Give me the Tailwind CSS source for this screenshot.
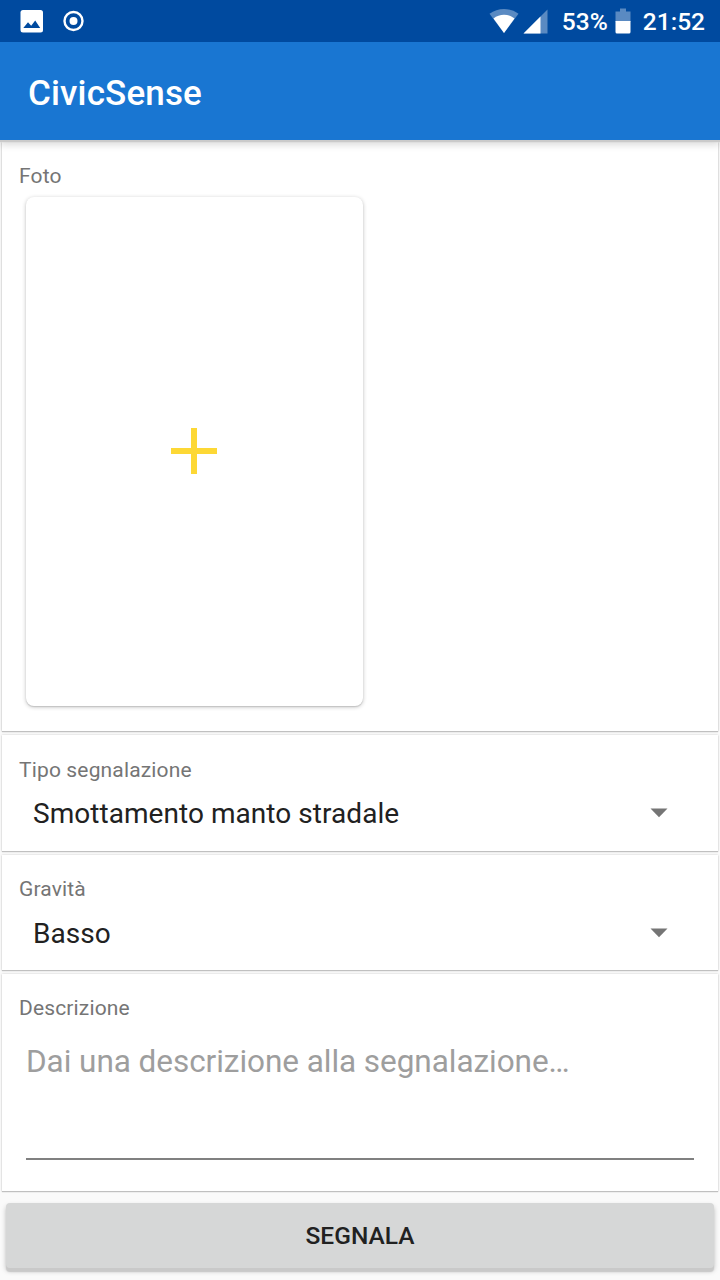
<!DOCTYPE html>
<html lang="it">
<head>
<meta charset="utf-8">
<title>CivicSense</title>
<script src="https://cdn.jsdelivr.net/npm/@tailwindcss/browser@4"></script>
</head>
<body class="w-[720px] h-[1280px] overflow-hidden bg-[#fafafa] font-['Roboto',sans-serif] text-[#212121] flex flex-col">
  <header class="relative z-10 shrink-0 shadow-[0_2px_1px_#cacaca,0_5px_7px_rgba(0,0,0,0.14)]">
    <div class="h-[42px] bg-[#004a9f] flex items-center pl-5 pr-[14px] text-white">
      <svg class="w-6 h-[42px]" viewBox="0 0 24 42" fill="none"><rect x="0.5" y="10" width="22.5" height="22.5" rx="2.500" fill="#fff"/><path d="M3.300 28 8 22.300l3.200 3.500 4-5.300 5 7.500z" fill="#004a9f"/></svg>
      <svg class="w-[22px] h-[42px] ml-[19px]" viewBox="0 0 22 42" fill="none"><circle cx="10.500" cy="21" r="9" stroke="#fff" stroke-width="2.400"/><circle cx="10.500" cy="21" r="4" fill="#fff"/></svg>
      <svg class="w-[30px] h-[42px] ml-auto" viewBox="0 0 30 42"><path d="M.5 13.800C9 7.300 21 7.300 29.500 13.800L15 33z" fill="#5a8ac2"/><path d="M4.500 18.500C10.500 13.500 19.500 13.500 25.500 18.500L15 33z" fill="#fff"/></svg>
      <svg class="w-[25px] h-[42px] ml-[4px]" viewBox="0 0 25 42"><path d="M0.500 33.500 24.500 9.500v24z" fill="#5a8ac2"/><path d="M.5 33.500 17.500 16.500v17z" fill="#fff"/></svg>
      <span class="ml-[14px] text-[24.5px] leading-[42px] pt-[2px] w-[53px] font-medium whitespace-nowrap">53%</span>
      <svg class="w-[16px] h-[42px]" viewBox="0 0 16 42"><path d="M.5 11.500H5V8.500h6v3h4.500V22H.5z" fill="#5a8ac2"/><path d="M.5 21h15v11q0 1.500-1.500 1.500H2Q.5 33.500.5 32z" fill="#fff"/></svg>
      <span class="ml-[12px] mr-px text-[24.5px] leading-[42px] pt-[2px] font-medium">21:52</span>
    </div>
    <div class="h-[98px] bg-[#1976d2] flex items-center pl-7 pt-[5px]">
      <h1 class="text-[35px] leading-[42px] font-medium text-white tracking-[0.15px]">CivicSense</h1>
    </div>
  </header>
  <main class="flex flex-col gap-[4px] px-[2px] pt-[2px]">
    <section class="h-[589px] bg-white shadow-[0_1px_1px_#c0c0c0,0_0_2px_#bbb] px-[18px] pt-[19px]">
      <p class="-ml-px text-[21px] leading-[30px] text-[#757575] tracking-[0.15px]">Foto</p>
      <div class="mt-[6px] ml-[6px] w-[337px] h-[509px] rounded-[8px] bg-white shadow-[0_1px_1px_#c4c4c4,0_1px_4px_#c4c4c4] flex items-center justify-center pr-[2px] pb-[2px]">
        <svg class="w-12 h-12" viewBox="0 0 48 48" fill="#fdd835"><path d="M21 1h6v20h20v6H27v20h-6V27H1v-6h20z"/></svg>
      </div>
    </section>
    <section class="h-[116px] bg-white shadow-[0_1px_1px_#c0c0c0,0_0_2px_#ccc] px-[18px] pt-[20px]">
      <p class="-ml-px text-[21px] leading-[30px] text-[#757575] tracking-[0.15px]">Tipo segnalazione</p>
      <div class="mt-[6px] h-[44px] pl-[13px] pr-[32px] flex items-center justify-between text-[28px] leading-[44px]">
        <span class="pt-[2px] tracking-[0.05px]">Smottamento manto stradale</span>
        <svg class="w-[18px] h-[10px]" viewBox="0 0 18 10"><path d="M.5.5h17L9 9.300z" fill="#757575"/></svg>
      </div>
    </section>
    <section class="h-[115px] bg-white shadow-[0_1px_1px_#c0c0c0,0_0_2px_#ccc] px-[18px] pt-[19px]">
      <p class="-ml-px text-[21px] leading-[30px] text-[#757575] tracking-[0.15px]">Gravità</p>
      <div class="mt-[7px] h-[44px] pl-[13px] pr-[32px] flex items-center justify-between text-[28px] leading-[44px]">
        <span class="pt-[2px] tracking-[0.05px]">Basso</span>
        <svg class="w-[18px] h-[10px]" viewBox="0 0 18 10"><path d="M.5.5h17L9 9.300z" fill="#757575"/></svg>
      </div>
    </section>
    <section class="h-[217px] bg-white shadow-[0_1px_1px_#c0c0c0,0_0_2px_#ccc] px-[18px] pt-[19px]">
      <p class="-ml-px text-[21px] leading-[30px] text-[#757575] tracking-[0.15px]">Descrizione</p>
      <div class="mt-[18px] ml-[6px] mr-[6px] h-[119px] pt-[1px] border-b-2 border-[#808080] text-[31.5px] leading-[40px] text-[#9e9e9e] tracking-[-0.05px]">Dai una descrizione alla segnalazione…</div>
    </section>
  </main>
  <button class="mx-[6px] mt-[12px] h-[65px] pt-[2px] rounded-[4px] bg-[#d6d7d7] shadow-[0_4px_1px_#c9c9c9,0_3px_5px_rgba(0,0,0,0.25)] text-[24.5px] font-medium">SEGNALA</button>
</body>
</html>
